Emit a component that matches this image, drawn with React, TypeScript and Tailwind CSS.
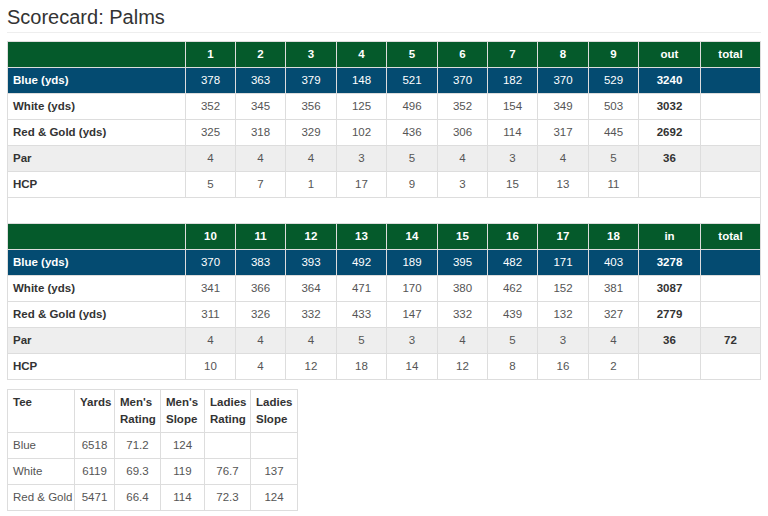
import React from "react";

type Row = {
  label: string;
  holes: (number | string)[];
  sum: number | string;
  total?: number | string;
  tone: "blue" | "white" | "par";
};

const front: Row[] = [
  { label: "Blue (yds)", holes: [378, 363, 379, 148, 521, 370, 182, 370, 529], sum: 3240, tone: "blue" },
  { label: "White (yds)", holes: [352, 345, 356, 125, 496, 352, 154, 349, 503], sum: 3032, tone: "white" },
  { label: "Red & Gold (yds)", holes: [325, 318, 329, 102, 436, 306, 114, 317, 445], sum: 2692, tone: "white" },
  { label: "Par", holes: [4, 4, 4, 3, 5, 4, 3, 4, 5], sum: 36, tone: "par" },
  { label: "HCP", holes: [5, 7, 1, 17, 9, 3, 15, 13, 11], sum: "", tone: "white" },
];

const back: Row[] = [
  { label: "Blue (yds)", holes: [370, 383, 393, 492, 189, 395, 482, 171, 403], sum: 3278, tone: "blue" },
  { label: "White (yds)", holes: [341, 366, 364, 471, 170, 380, 462, 152, 381], sum: 3087, tone: "white" },
  { label: "Red & Gold (yds)", holes: [311, 326, 332, 433, 147, 332, 439, 132, 327], sum: 2779, tone: "white" },
  { label: "Par", holes: [4, 4, 4, 5, 3, 4, 5, 3, 4], sum: 36, total: 72, tone: "par" },
  { label: "HCP", holes: [10, 4, 12, 18, 14, 12, 8, 16, 2], sum: "", tone: "white" },
];

const tees = [
  ["Blue", "6518", "71.2", "124", "", ""],
  ["White", "6119", "69.3", "119", "76.7", "137"],
  ["Red & Gold", "5471", "66.4", "114", "72.3", "124"],
];

const cell = "border border-[#dddddd] px-[5px] py-1 leading-[17px]";

function HeaderRow({ holes, sumLabel }: { holes: number[]; sumLabel: string }) {
  return (
    <tr className="bg-[#055a2b] text-white font-bold">
      <th className={cell}></th>
      {holes.map((h) => (
        <th key={h} className={`${cell} text-center`}>
          {h}
        </th>
      ))}
      <th className={`${cell} text-center`}>{sumLabel}</th>
      <th className={`${cell} text-center`}>total</th>
    </tr>
  );
}

function DataRow({ row }: { row: Row }) {
  const bg =
    row.tone === "blue"
      ? "bg-[#044b71] text-white"
      : row.tone === "par"
        ? "bg-[#eeeeee] text-[#555555]"
        : "bg-white text-[#555555]";
  const strong = row.tone === "blue" ? "text-white" : "text-[#333333]";
  return (
    <tr className={bg}>
      <td className={`${cell} font-bold ${strong}`}>{row.label}</td>
      {row.holes.map((v, i) => (
        <td key={i} className={`${cell} text-center`}>
          {v}
        </td>
      ))}
      <td className={`${cell} text-center font-bold ${strong}`}>{row.sum}</td>
      <td className={`${cell} text-center font-bold ${strong}`}>{row.total ?? ""}</td>
    </tr>
  );
}

export default function App() {
  return (
    <div className="min-h-[516px] bg-white px-[7px] pt-[6px] font-['Liberation_Sans',Arial,sans-serif] text-[11.5px] text-[#333333]">
      <h3 className="text-[20px] leading-[22px] text-[#333333]">Scorecard: Palms</h3>
      <hr className="mt-[4px] mb-[8px] border-t border-[#eeeeee]" />

      <table className="w-[753px] table-fixed border-collapse">
        <colgroup>
          <col className="w-[178px]" />
          {[50, 50, 51, 50, 51, 50, 50, 51, 50].map((w, i) => (
            <col key={i} style={{ width: w }} />
          ))}
          <col className="w-[62px]" />
          <col className="w-[60px]" />
        </colgroup>
        <tbody>
          <HeaderRow holes={[1, 2, 3, 4, 5, 6, 7, 8, 9]} sumLabel="out" />
          {front.map((r) => (
            <DataRow key={r.label} row={r} />
          ))}
          <tr>
            <td colSpan={12} className={`${cell} h-[26px]`}></td>
          </tr>
          <HeaderRow holes={[10, 11, 12, 13, 14, 15, 16, 17, 18]} sumLabel="in" />
          {back.map((r) => (
            <DataRow key={r.label + "b"} row={r} />
          ))}
        </tbody>
      </table>

      <table className="mt-[9px] w-[290px] table-fixed border-collapse">
        <colgroup>
          <col className="w-[67px]" />
          <col className="w-[40px]" />
          <col className="w-[46px]" />
          <col className="w-[44px]" />
          <col className="w-[46px]" />
          <col className="w-[47px]" />
        </colgroup>
        <thead>
          <tr className="text-left align-top font-bold text-[#333333]">
            <th className={cell}>Tee</th>
            <th className={cell}>Yards</th>
            <th className={cell}>Men's Rating</th>
            <th className={cell}>Men's Slope</th>
            <th className={cell}>Ladies Rating</th>
            <th className={cell}>Ladies Slope</th>
          </tr>
        </thead>
        <tbody className="text-[#555555]">
          {tees.map((t) => (
            <tr key={t[0]}>
              {t.map((v, i) => (
                <td key={i} className={`${cell} whitespace-nowrap ${i === 0 ? "text-left" : "text-center"}`}>
                  {v}
                </td>
              ))}
            </tr>
          ))}
        </tbody>
      </table>
    </div>
  );
}
